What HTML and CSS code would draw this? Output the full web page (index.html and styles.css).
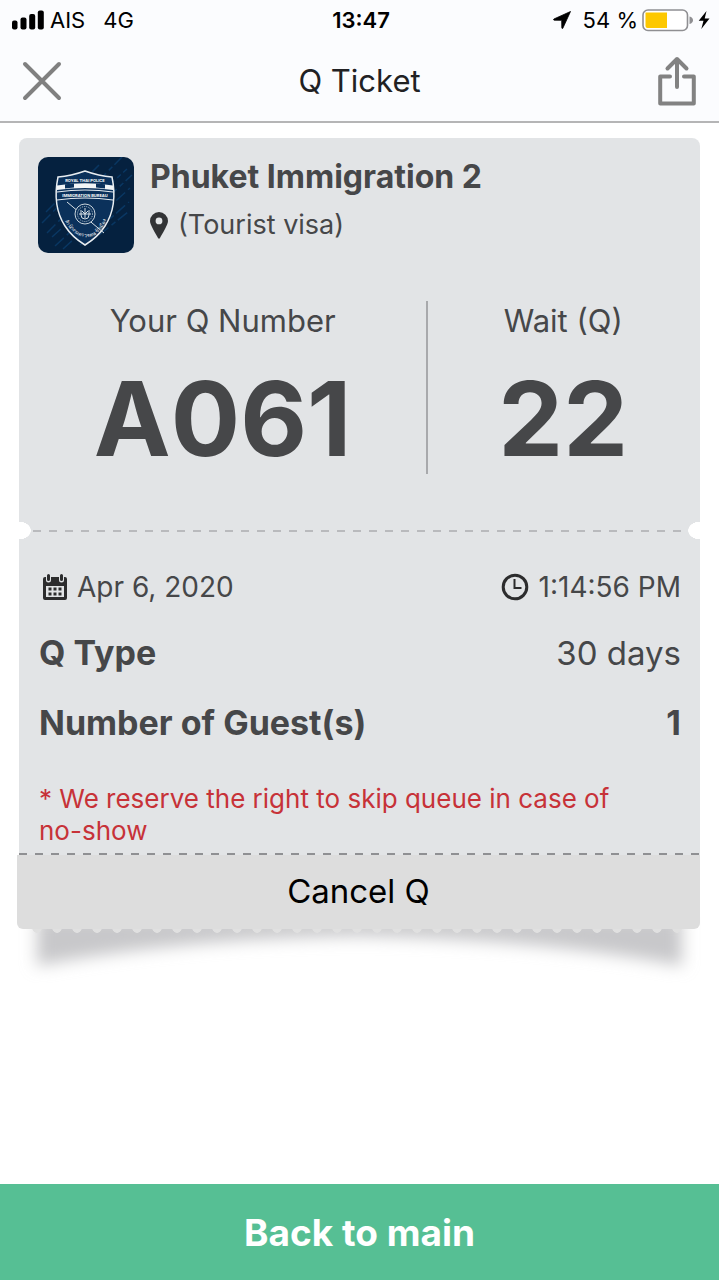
FILE: index.html
```html
<!DOCTYPE html>
<html lang="en">
<head>
<meta charset="utf-8">
<meta name="viewport" content="width=device-width, initial-scale=1">
<title>Q Ticket</title>
<link rel="stylesheet" href="styles.css">
</head>
<body>
<header class="top">
  <div class="status">
    <div class="status-side">
      <svg class="signal" width="32" height="20" viewBox="0 0 32 20" aria-hidden="true"><rect x="0" y="10.500" width="5.500" height="9" rx="2"/><rect x="8.500" y="7.500" width="6" height="12" rx="2"/><rect x="17.200" y="4" width="6" height="15.500" rx="2"/><rect x="25.800" y="0.500" width="6" height="19" rx="2"/></svg>
      <span>AIS</span><span class="network">4G</span>
    </div>
    <span class="clock">13:47</span>
    <div class="status-side status-right">
      <svg class="locate" width="18" height="18" viewBox="0 0 18 18" aria-hidden="true"><path d="M17.500 .5 9.800 17.300Q9 18 8.800 16.800L8.700 9.300 1.200 9.200Q0 8.900 .9 8Z" stroke="#000" stroke-width=".8"/></svg>
      <span>54 %</span>
      <svg class="battery" width="52" height="24" viewBox="0 0 52 24" aria-hidden="true"><rect x="1" y="2" width="44.500" height="20.500" rx="5" fill="#fff" stroke="#8f8f92" stroke-width="1.600"/><path d="M3.500 4.500H25V20H5.500Q3.500 20 3.500 18Z" fill="#fdc800"/><path d="M47.500 8.500Q51 9.500 51 12.200T47.500 16Z" fill="#8f8f92"/></svg>
      <svg width="12" height="18" viewBox="0 0 12 18" aria-hidden="true"><path d="M8.500 0 .7 9.800H5.500L3.300 18 11.500 7.500H6.700Z"/></svg>
    </div>
  </div>
  <nav class="nav">
    <button class="icon-button" type="button" aria-label="Close"><svg width="40" height="40" viewBox="0 0 40 40"><path d="M3 3 37 37M37 3 3 37" fill="none" stroke="#808080" stroke-width="4" stroke-linecap="round"/></svg></button>
    <h1 class="nav-title">Q Ticket</h1>
    <button class="icon-button" type="button" aria-label="Share"><svg width="40" height="50" viewBox="0 0 40 50"><path d="M13 20.500H3.200V47.500H36.800V20.500H27M20 31V3M10.500 12.500 20 3 29.500 12.500" fill="none" stroke="#828282" stroke-width="4" stroke-linecap="round" stroke-linejoin="round"/></svg></button>
  </nav>
</header>
<main class="main">
  <article class="ticket">
    <section class="place">
      <svg class="logo" width="96" height="96" viewBox="0 0 96 96" role="img" aria-label="Royal Thai Police Immigration Bureau">
        <defs><path id="arc" d="M20 48Q30 78 47 80T74 48"/></defs>
        <rect width="96" height="96" fill="#05213f"/>
        <g stroke="#0d4375" stroke-width="1.500" stroke-dasharray="12 4 5 3"><path d="M4 66 61 8M9 76 84 0M14 80 89 12M17 89 94 18M25 92 92 31M42 88 91 45M8 55 49 14M61 78 90 55" opacity=".65"/></g>
        <path d="M20 20Q33 19 47 14Q61 19 74 20Q80 49 67 69Q60 80 47 88Q34 80 27 69Q14 49 20 20Z" fill="#0b315b" stroke="#e8edf1" stroke-width="1.500"/>
        <path d="M19 28.500Q47 24 75 28.500V33Q47 29 19 33Z" fill="#f2f5f7"/>
        <path d="M27 27.300 36 26.500V30.500L27 31.500ZM58 26.500 67 27.300V31.500L58 30.500Z" fill="#0b315b"/>
        <path d="M19 35Q47 31 75 35M19 43Q47 39 75 43" fill="none" stroke="#e8edf1"/>
        <path d="M29 45 66 76" stroke="#d9e1e6"/>
        <circle cx="47" cy="57" r="10" fill="#0b315b" stroke="#c9d4dc"/><circle cx="47" cy="57" r="7.500" fill="none" stroke="#b8c7d2" stroke-dasharray="1 1"/>
        <path d="M43 53V58Q43 62 47 62T51 58V53M41 57H53M47 51V61M44 54 47 57 50 54" fill="none" stroke="#d9e1e6"/>
        <text x="47" y="24.500" class="crest-text">ROYAL THAI POLICE</text>
        <text x="47" y="39.500" class="crest-text">IMMIGRATION BUREAU</text>
        <text class="crest-thai"><textPath href="#arc" startOffset="50%">สำนักงานตรวจคนเข้าเมือง</textPath></text>
      </svg>
      <div class="place-text">
        <h2 class="place-name">Phuket Immigration 2</h2>
        <p class="place-kind"><svg width="18" height="27" viewBox="0 0 18 27" aria-hidden="true"><path d="M9 0A9 9 0 0 0 0 9C0 13 6 22 8 26Q9 27.500 10 26C12 22 18 13 18 9A9 9 0 0 0 9 0ZM9 5.500A3.400 3.400 0 1 1 9 12.300 3.400 3.400 0 0 1 9 5.500Z" fill="#323335" fill-rule="evenodd"/></svg>(Tourist visa)</p>
      </div>
    </section>
    <section class="numbers">
      <div class="number"><span class="number-label">Your Q Number</span><strong class="number-value">A061</strong></div>
      <div class="number number-wait"><span class="number-label">Wait (Q)</span><strong class="number-value">22</strong></div>
    </section>
    <div class="tear"></div>
    <section class="details">
      <div class="when">
        <span class="when-item"><svg width="24" height="26" viewBox="0 0 24 26" aria-hidden="true"><path d="M2 3H3V6Q3 8.500 5.500 8.500T8 6V3H16V6Q16 8.500 18.500 8.500T21 6V3H22Q24 3 24 5V24Q24 26 22 26H2Q0 26 0 24V5Q0 3 2 3ZM3 12V23H21V12Z" fill="#2c2c2d" fill-rule="evenodd"/><path d="M5.500 1.500V5.500M18.500 1.500V5.500" stroke="#2c2c2d" stroke-width="3" stroke-linecap="round"/><path d="M5.500 13.500h3v3h-3zM10.500 13.500h3v3h-3zM15.500 13.500h3v3h-3zM5.500 18.500h3v3h-3zM10.500 18.500h3v3h-3zM15.500 18.500h3v3h-3z" fill="#2c2c2d"/></svg>Apr 6, 2020</span>
        <span class="when-item"><svg width="28" height="28" viewBox="0 0 28 28" aria-hidden="true"><circle cx="14" cy="14" r="11.800" fill="none" stroke="#2c2c2d" stroke-width="3"/><path d="M13.500 6V15H20.500" fill="none" stroke="#2c2c2d" stroke-width="2"/></svg>1:14:56 PM</span>
      </div>
      <dl class="facts">
        <div class="fact"><dt>Q Type</dt><dd>30 days</dd></div>
        <div class="fact"><dt>Number of Guest(s)</dt><dd class="strong">1</dd></div>
      </dl>
      <p class="note">* We reserve the right to skip queue in case of <span class="whole">no-show</span></p>
    </section>
    <div class="cut"></div>
    <button class="cancel" type="button">Cancel Q</button>
    <div class="scallops"></div>
    <svg class="shadow" viewBox="0 0 682 60" preserveAspectRatio="none" aria-hidden="true"><defs><filter id="soft" x="-10%" y="-100%" width="120%" height="300%"><feGaussianBlur stdDeviation="8"/></filter></defs><path d="M18 -10H664V39Q520 12 341 9Q160 12 18 39Z" fill="#c8c8ca" filter="url(#soft)"/></svg>
  </article>
</main>
<button class="back" type="button">Back to main</button>
</body>
</html>
```

FILE: styles.css
```css
* { box-sizing: border-box; }
body {
  margin: 0;
  min-height: 100vh;
  display: flex;
  flex-direction: column;
  background: #fff;
  color: #464749;
  font-family: Inter, "Liberation Sans", sans-serif;
}
h1, h2, p, dl, dd { margin: 0; }
button { border: 0; padding: 0; background: none; font: inherit; cursor: pointer; }
svg { display: block; flex: none; }

.top { background: #fbfcfe; border-bottom: 2px solid #b5b5b6; }
.status {
  display: grid;
  grid-template-columns: 1fr auto 1fr;
  align-items: center;
  height: 40px;
  padding: 0 9px 0 12px;
  color: #000;
  font-size: 22px;
}
.status-side { display: flex; align-items: center; gap: 6px; }
.network { margin-left: 12px; }
.clock { font-weight: 600; }
.status-right { justify-content: flex-end; gap: 4px; }
.locate { margin-right: 8px; }
.nav {
  display: flex;
  align-items: center;
  justify-content: space-between;
  height: 81px;
  padding: 0 22px;
}
.icon-button { width: 40px; display: flex; justify-content: center; }
.nav-title { color: #212123; font-size: 31px; font-weight: 400; }

.main { flex: 1; padding: 15px 19px 32px; }
.ticket {
  isolation: isolate;
  border-radius: 8px 8px 0 0;
  background: linear-gradient(#e2e4e6, #e2e4e6) no-repeat 0 0 / 100% calc(100% - 132px);
}
.place { display: flex; gap: 16px; padding: 19px 19px 0; }
.logo { border-radius: 10px; }
.crest-text { fill: #fff; font-size: 4px; font-weight: 700; text-anchor: middle; }
.crest-thai { fill: #e8edf1; font-size: 5px; text-anchor: middle; }
.place-name { font-size: 32px; font-weight: 700; line-height: 40px; }
.place-kind {
  display: flex;
  align-items: center;
  gap: 10px;
  margin-top: 10px;
  font-size: 27px;
  line-height: 36px;
}
.numbers { display: grid; grid-template-columns: 3fr 2fr; padding: 48px 2px 48px 0; }
.number { display: flex; flex-direction: column; align-items: center; height: 173px; }
.number-wait { border-left: 2px solid #a8a9ac; }
.number-label { font-size: 31px; line-height: 40px; }
.number-value { font-size: 103px; font-weight: 700; line-height: 128px; margin-top: 14px; }
.tear {
  height: 17px;
  background:
    radial-gradient(ellipse 12px 9px at 0 50%, #fff 96%, transparent),
    radial-gradient(ellipse 12px 9px at 100% 50%, #fff 96%, transparent),
    repeating-linear-gradient(90deg, #b9babd 0 8px, transparent 8px 16px) no-repeat 14px 8px / calc(100% - 32px) 2px;
}
.details { padding: 28px 19px 6px 20px; }
.when { display: flex; justify-content: space-between; font-size: 28px; line-height: 40px; }
.when-item { display: flex; align-items: center; gap: 10px; }
.when-item:first-child { padding-left: 4px; }
.facts { font-size: 34px; }
.fact { display: flex; justify-content: space-between; margin-top: 26px; line-height: 44px; }
.fact:first-child { margin-top: 24px; }
.fact dd { font-size: 33px; }
.fact dt, .fact .strong { font-size: 34px; font-weight: 700; }
.note { margin-top: 38px; color: #c73238; font-size: 26px; line-height: 32px; }
.whole { white-space: nowrap; }
.cut {
  height: 2px;
  background: repeating-linear-gradient(90deg, #8f9093 0 8px, #e2e4e6 8px 16px);
}
.cancel {
  display: block;
  width: calc(100% + 2px);
  height: 74px;
  margin-left: -2px;
  padding-bottom: 2px;
  border-radius: 0 0 6px 6px;
  background: #ddd;
  color: #000;
  font-size: 33px;
}
.scallops {
  height: 4px;
  margin: 0 8px;
  background: radial-gradient(circle 5px at 50% -1px, #e0e0e0 90%, transparent) 0 0 / 20px 4px;
}
.shadow { position: relative; z-index: -1; width: 100%; height: 60px; margin-top: -6px; overflow: visible; }
.back {
  width: 100%;
  height: 96px;
  background: #56bf94;
  color: #fff;
  font-size: 37px;
  font-weight: 700;
}
```
